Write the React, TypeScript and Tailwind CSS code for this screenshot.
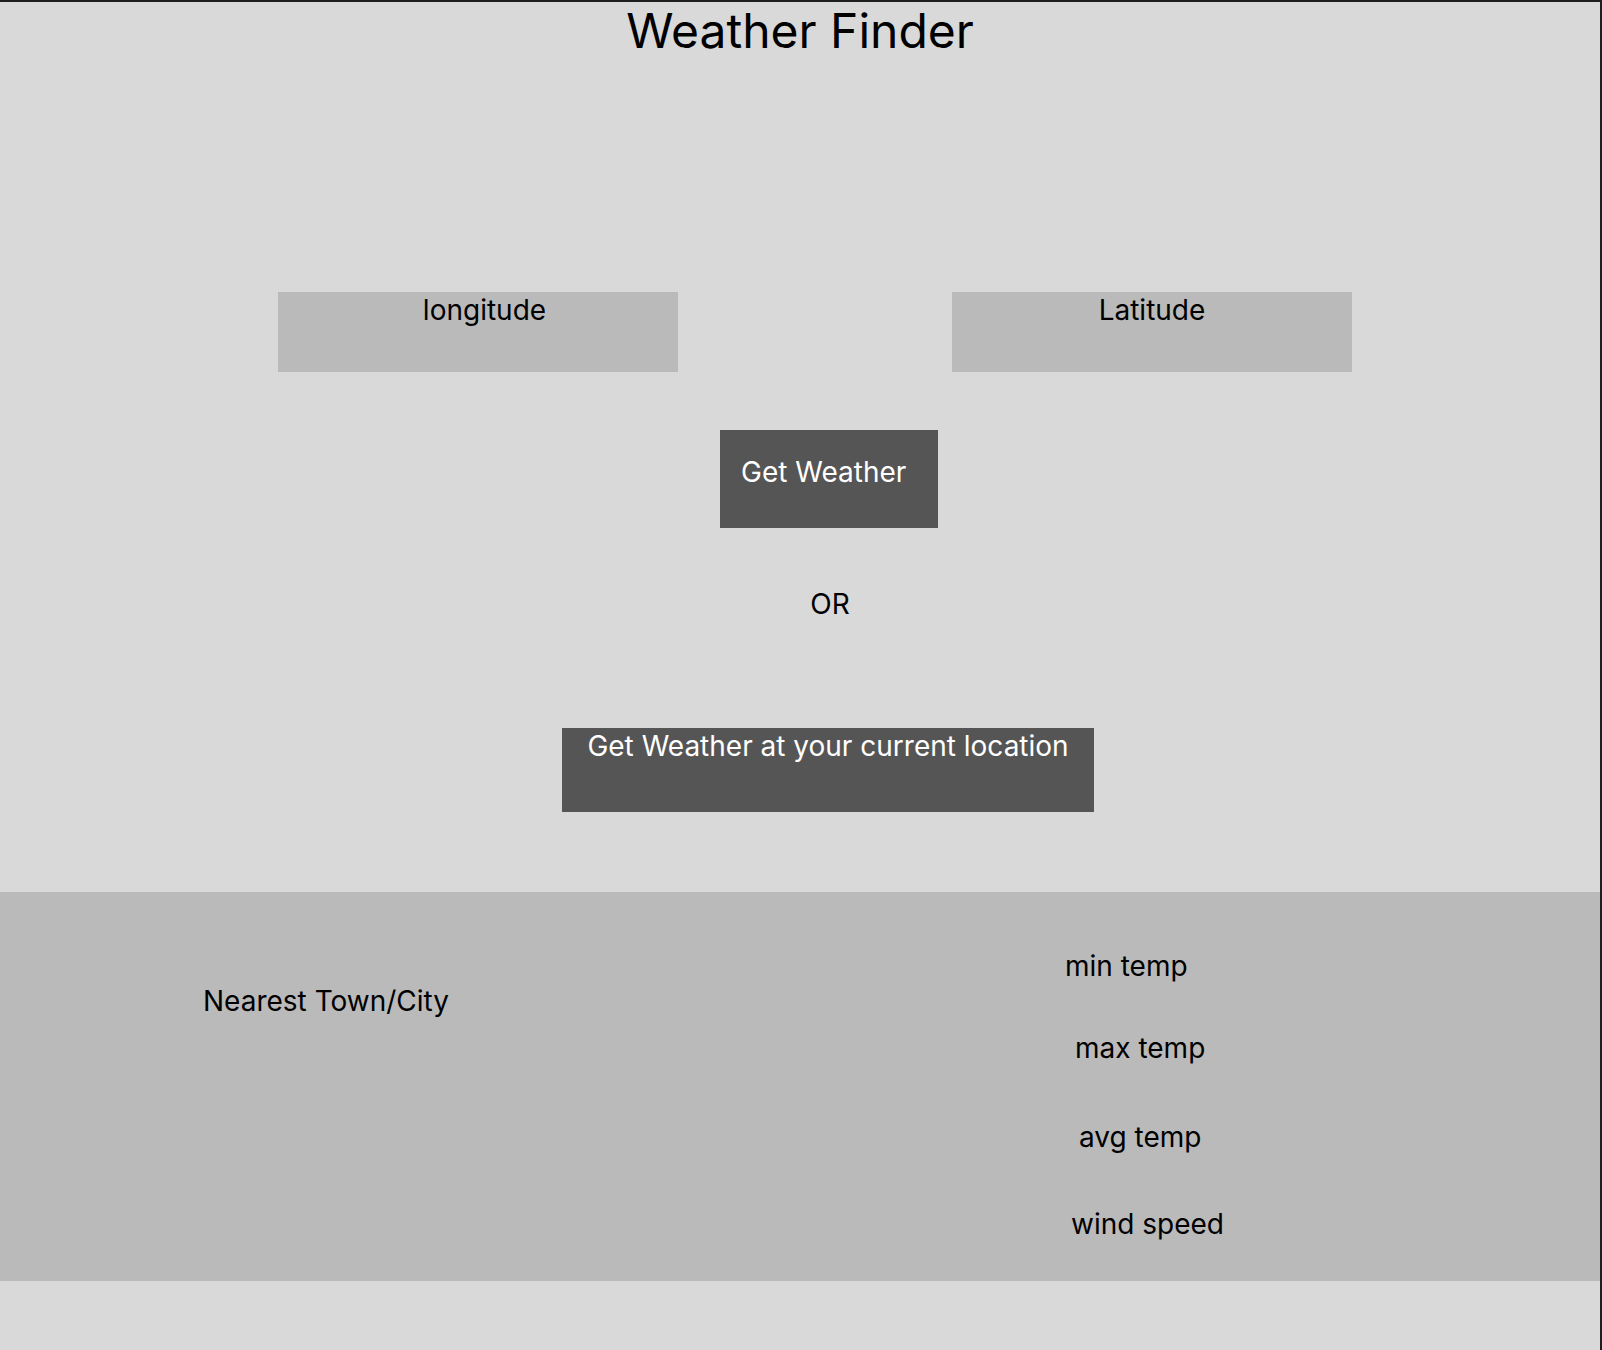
const readings = [
  { label: "min temp", className: "ml-0 mt-[57px]" },
  { label: "max temp", className: "ml-[10px] mt-[48px]" },
  { label: "avg temp", className: "ml-[14px] mt-[55px]" },
  { label: "wind speed", className: "ml-[6px] mt-[53px]" },
];

const CoordBox = ({ label, className }: { label: string; className?: string }) => (
  <div className="w-[400px] h-[80px] bg-[#bababa] flex justify-center pt-[1px]">
    <span className={className}>{label}</span>
  </div>
);

const App = () => {
  return (
    <div className="min-h-screen bg-[#1e1e1e] pt-[2px] pr-[2px] font-[Inter,sans-serif] text-black">
      <div className="w-[1600px] min-h-[1348px] bg-[#d9d9d9] flex flex-col">
        <h1 className="text-[48px] leading-[58px] text-center">Weather Finder</h1>

        {/* coordinates */}
        <div className="flex flex-row gap-[274px] pl-[278px] mt-[232px] text-[28px] leading-[34px]">
          <CoordBox label="longitude" className="ml-[13px]" />
          <CoordBox label="Latitude" />
        </div>

        <div className="flex flex-col items-center pl-[58px] text-[28px] leading-[34px]">
          <button className="mt-[58px] w-[218px] h-[98px] bg-[#555555] text-white text-left pl-[21px] pt-[25px] flex items-start">
            Get Weather
          </button>
          <span className="mt-[59px] ml-[2px]">OR</span>
          <button className="mt-[107px] -ml-[2px] w-[532px] h-[84px] bg-[#555555] text-white flex justify-center items-start pt-[1px]">
            Get Weather at your current location
          </button>
        </div>

        {/* results */}
        <div className="mt-[80px] h-[389px] bg-[#bababa] flex flex-row text-[28px] leading-[34px]">
          <div className="w-[1065px] pl-[203px] pt-[92px]">Nearest Town/City</div>
          <div className="flex flex-col items-start">
            {readings.map((r) => (
              <span key={r.label} className={r.className}>
                {r.label}
              </span>
            ))}
          </div>
        </div>
      </div>
    </div>
  );
};

export default App;
